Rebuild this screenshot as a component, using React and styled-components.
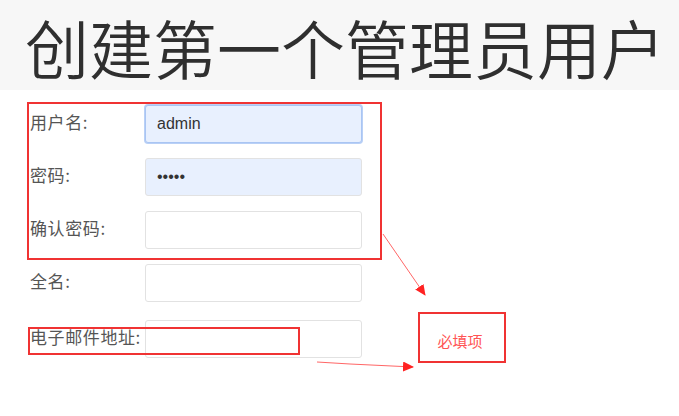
import React from 'react'
import styled, { createGlobalStyle } from 'styled-components'

const GlobalStyle = createGlobalStyle`
  html, body {
    margin: 0;
    padding: 0;
    background: #fff;
  }
  body {
    font-family: "Noto Sans CJK SC", "Noto Sans", sans-serif;
  }
`

const Page = styled.div`
  position: relative;
  width: 679px;
  height: 416px;
  overflow: hidden;
  background: #fff;
`

const Header = styled.header`
  height: 90px;
  box-sizing: border-box;
  padding: 15px 0 0 25px;
  background: #f7f7f7;
`

const Title = styled.h1`
  margin: 0;
  font-size: 64px;
  line-height: 63px;
  font-weight: 350;
  color: #2f2f2f;
  white-space: nowrap;
`

const Form = styled.form`
  display: flex;
  flex-direction: column;
  gap: 15px;
  padding: 15px 0 0 30px;
`

const Row = styled.div`
  display: grid;
  grid-template-columns: 115px 217px;
  align-items: center;
  margin-top: ${p => (p.$extra ? '3px' : '0')};
`

const Label = styled.label`
  font-size: 17px;
  letter-spacing: 0.6px;
  color: #555;
  white-space: nowrap;
  margin-bottom: 6px;
`

const Input = styled.input`
  box-sizing: border-box;
  width: 217px;
  height: 38px;
  margin: 0;
  padding: 0 11px;
  border: 1px solid ${p => (p.$focused ? '#a9c5f3' : '#e2e2e2')};
  box-shadow: ${p => (p.$focused ? '0 0 0 1px #b9d0f6' : 'none')};
  border-radius: 3px;
  background: ${p => (p.$filled ? '#e8f0fe' : '#fff')};
  font-family: "Liberation Sans", Arial, sans-serif;
  font-size: 16px;
  color: #333;
  outline: none;
`

const Marks = styled.svg`
  position: absolute;
  left: 0;
  top: 0;
  pointer-events: none;
`

const Note = styled.div`
  position: absolute;
  left: 418px;
  top: 312px;
  width: 88px;
  height: 51px;
  box-sizing: border-box;
  border: 2px solid #f03333;
  display: flex;
  align-items: center;
  justify-content: center;
  padding: 5px 4px 0 0;
  font-size: 15px;
  color: #f55;
`

const fields = [
  { label: '用户名:', type: 'text', value: 'admin', focused: true },
  { label: '密码:', type: 'password', value: 'admin' },
  { label: '确认密码:', type: 'password', value: '' },
  { label: '全名:', type: 'text', value: '' },
  { label: '电子邮件地址:', type: 'email', value: '', extra: true }
]

const App = () => (
  <Page>
    <GlobalStyle />
    <Header>
      <Title>创建第一个管理员用户</Title>
    </Header>
    <Form onSubmit={e => e.preventDefault()}>
      {fields.map(f => (
        <Row key={f.label} $extra={f.extra}>
          <Label>{f.label}</Label>
          <Input
            type={f.type}
            defaultValue={f.value}
            readOnly
            $focused={f.focused}
            $filled={!!f.value}
          />
        </Row>
      ))}
    </Form>
    <Marks width="679" height="416" viewBox="0 0 679 416">
      <defs>
        <marker id="head" markerWidth="11" markerHeight="10" refX="10" refY="5" orient="auto" markerUnits="userSpaceOnUse">
          <path d="M0 0 L11 5 L0 10 Z" fill="#f22" />
        </marker>
      </defs>
      <rect x="28" y="103" width="353" height="156" fill="none" stroke="#f03333" strokeWidth="2" />
      <rect x="29" y="328" width="270" height="26" fill="none" stroke="#f03333" strokeWidth="2" />
      <path d="M383 234 L425 295" stroke="#f66" strokeWidth="1" fill="none" markerEnd="url(#head)" />
      <path d="M317 362 L350 364 L413 367" stroke="#f66" strokeWidth="1" fill="none" markerEnd="url(#head)" />
    </Marks>
    <Note>必填项</Note>
  </Page>
)

export default App
